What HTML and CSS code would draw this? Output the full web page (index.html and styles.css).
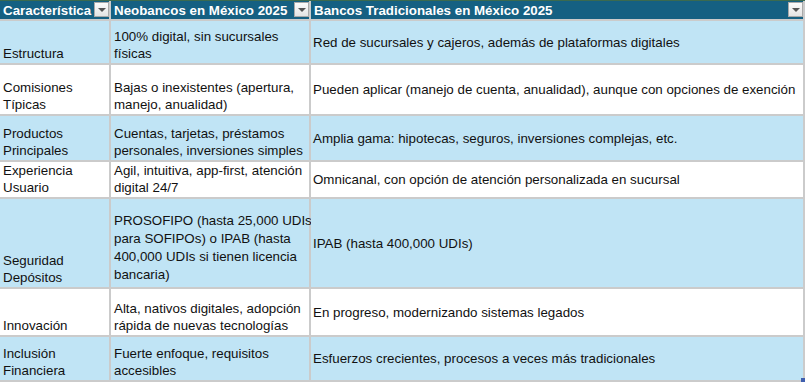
FILE: index.html
```html
<!DOCTYPE html>
<html lang="es">
<head>
<meta charset="utf-8">
<title>Neobancos vs Bancos Tradicionales</title>
<link rel="stylesheet" href="styles.css">
</head>
<body>
<div class="sheet">
  <div class="hd"><span>Característica</span><span class="dd"></span></div>
  <div class="hd"><span>Neobancos en México 2025</span><span class="dd"></span></div>
  <div class="hd"><span>Bancos Tradicionales en México 2025</span><span class="dd"></span></div>

  <div class="c band">Estructura</div>
  <div class="c band">100% digital, sin sucursales<br>físicas</div>
  <div class="c mid band">Red de sucursales y cajeros, además de plataformas digitales</div>

  <div class="c">Comisiones<br>Típicas</div>
  <div class="c">Bajas o inexistentes (apertura,<br>manejo, anualidad)</div>
  <div class="c mid">Pueden aplicar (manejo de cuenta, anualidad), aunque con opciones de exención</div>

  <div class="c band">Productos<br>Principales</div>
  <div class="c band">Cuentas, tarjetas, préstamos<br>personales, inversiones simples</div>
  <div class="c mid band">Amplia gama: hipotecas, seguros, inversiones complejas, etc.</div>

  <div class="c">Experiencia<br>Usuario</div>
  <div class="c">Agil, intuitiva, app-first, atención<br>digital 24/7</div>
  <div class="c mid">Omnicanal, con opción de atención personalizada en sucursal</div>

  <div class="c band">Seguridad<br>Depósitos</div>
  <div class="c band tall">PROSOFIPO (hasta 25,000 UDIs<br>para SOFIPOs) o IPAB (hasta<br>400,000 UDIs si tienen licencia<br>bancaria)</div>
  <div class="c mid band">IPAB (hasta 400,000 UDIs)</div>

  <div class="c">Innovación</div>
  <div class="c">Alta, nativos digitales, adopción<br>rápida de nuevas tecnologías</div>
  <div class="c mid">En progreso, modernizando sistemas legados</div>

  <div class="c band">Inclusión<br>Financiera</div>
  <div class="c band">Fuerte enfoque, requisitos<br>accesibles</div>
  <div class="c mid band">Esfuerzos crecientes, procesos a veces más tradicionales</div>

  <span class="handle"></span>
</div>
</body>
</html>
```

FILE: styles.css
```css
html, body {
  margin: 0;
  padding: 0;
  background: #ffffff;
}

.sheet {
  position: relative;
  width: 805px;
  box-sizing: border-box;
  display: grid;
  grid-template-columns: 109px 198px 492px;
  grid-template-rows: 18px 42px 49px 44px 35px 88px 46px 43px;
  gap: 2px;
  padding: 0 2px 2px 0;
  border-top: 1px solid #3b6a4f;
  background: #cbcbcb;
  font-family: "Liberation Sans", Arial, sans-serif;
  font-size: 13.33px;
  line-height: 17px;
  color: #111111;
}

.hd {
  background: #156082;
  color: #ffffff;
  font-weight: bold;
  display: flex;
  align-items: center;
  padding-left: 3px;
  white-space: nowrap;
}

.hd span:first-child {
  flex: 1;
}

.dd {
  width: 15px;
  height: 15px;
  box-sizing: border-box;
  margin-right: 0;
  margin-top: -1px;
  border: 1px solid #a9a9a9;
  background: linear-gradient(#fbfbfb, #e4e4e4);
  display: flex;
  align-items: center;
  justify-content: center;
}

.dd::after {
  content: "";
  width: 0;
  height: 0;
  border-left: 4px solid transparent;
  border-right: 4px solid transparent;
  border-top: 4px solid #555555;
  margin-top: 1px;
}

.c {
  background: #ffffff;
  display: flex;
  flex-direction: column;
  justify-content: flex-end;
  padding: 0 3px 1px 3px;
  white-space: nowrap;
}

.c.band {
  background: #c0e4f5;
}

.c.mid {
  justify-content: center;
  padding-left: 2px;
  padding-bottom: 0;
}

.c.tall {
  line-height: 18px;
  padding-bottom: 3px;
}

.handle {
  position: absolute;
  right: 0;
  bottom: 0;
  width: 4px;
  height: 4px;
  background: #3f5fae;
}
```
